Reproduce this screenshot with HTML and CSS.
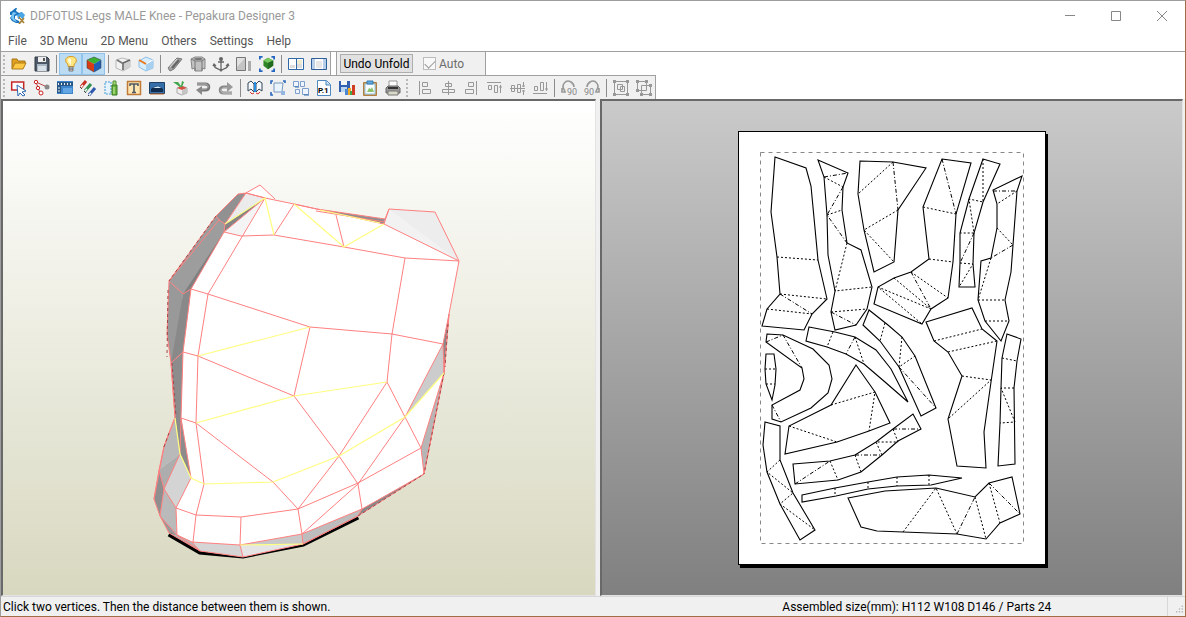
FILE: index.html
```html
<!DOCTYPE html>
<html lang="en">

<head>
    <meta charset="UTF-8">
    <meta name="viewport" content="width=device-width, initial-scale=1.0">
    <title>DDFOTUS Legs MALE Knee - Pepakura Designer 3</title>
    <link rel="stylesheet" href="styles.css">
</head>

<body>
    <!-- Title bar -->
    <header class="title-bar">
        <svg class="app-icon" viewBox="0 0 16 16">
            <path d="M8 0C5 0 5 2 3 3L1 4l0 3 2 0-2 3 2 3 4 2h4l-1-2-4-2 0-3 3-1 4-1 0-2-3 1-3-2z" fill="#1973bd"/>
            <path d="M4 4 3 6l-1 4 3 3 3 1-3-4 0-3 3-2z" fill="#7cc6f5"/>
            <path d="m8 7 5-3 3 3-2 4-5 0z" fill="#4aa5e4"/>
            <path d="m10 9 5 6M15 10l-5 6" stroke="#a8843c" stroke-width="1.800"/>
            <path d="m11 9 2 2" stroke="#ddd"/>
        </svg>
        <h1>DDFOTUS Legs MALE Knee - Pepakura Designer 3</h1>
        <div class="window-buttons">
            <button aria-label="Minimize"><svg viewBox="0 0 12 12"><path d="M1 5.500h10"/></svg></button>
            <button aria-label="Maximize"><svg viewBox="0 0 12 12"><path d="M1.500 1.500h9v9h-9z"/></svg></button>
            <button aria-label="Close"><svg viewBox="0 0 12 12"><path d="m1 1 10 10M11 1 1 11"/></svg></button>
        </div>
    </header>

    <nav class="menu-bar">
        <button>File</button>
        <button>3D Menu</button>
        <button>2D Menu</button>
        <button>Others</button>
        <button>Settings</button>
        <button>Help</button>
    </nav>

    <!-- Toolbars -->
    <div class="toolbar-row">
        <div class="toolbar">
            <span class="grip"></span>
            <button aria-label="Open"><svg viewBox="0 0 16 16"><path d="M1 13V3h5l1 2h7v3" fill="#e0a020" stroke="#a87414"/><path d="m1 13 3-6h11l-3 6z" fill="#ffc845" stroke="#b07c18"/></svg></button>
            <button aria-label="Save"><svg viewBox="0 0 16 16"><path d="M1 1h12l2 2v12H1z" fill="#4d5866" stroke="#343c46"/><path d="M4 1h8v5H4z" fill="#eee"/><path d="M9 2h2v3H9z" fill="#555"/><path d="M3 8h10v7H3z" fill="#a9b6c4"/><path d="M4 10h8v5H4z" fill="#d9e1e8"/></svg></button>
            <span class="separator"></span>
            <button class="active" aria-label="Light"><svg viewBox="0 0 16 16"><path d="M8 .500c7 0 6 6 3 8v2H5v-2c-3-2-4-8 3-8z" fill="#ffe680" stroke="#d89a20"/><path d="M7 2.500c-3 0-2 3-1 4l2 3V3z" fill="#fffbe0"/><path d="M6 11h4v4H6z" fill="#ddd" stroke="#777"/><path d="M6 13h4" stroke="#555"/></svg></button>
            <button class="active" aria-label="Texture"><svg viewBox="0 0 16 16"><path d="m1 4 7-3 7 3-7 4z" fill="#39b133"/><path d="m1 4 7 4v8l-7-4z" fill="#d83c14"/><path d="m15 4-7 4v8l7-4z" fill="#1f5fb8"/><path d="m1 4 7-3 7 3v8l-7 4-7-4z" fill="none" stroke="#333" stroke-opacity=".5"/></svg></button>
            <span class="separator"></span>
            <button aria-label="Edge"><svg viewBox="0 0 16 16"><path d="m1 4 6-2 8 2v7l-7 4-7-3z" fill="#f2f2f2" stroke="#b8b8b8"/><path d="M8 8v7l7-4V5z" fill="#cfcfcf"/><path d="m2 4 6 3.500V14" fill="none" stroke="#777" stroke-width="1.800"/><path d="m8 7 7-3" stroke="#666" stroke-width="1.500"/></svg></button>
            <button aria-label="Cut edge"><svg viewBox="0 0 16 16"><path d="m1 5 7-4 7 3v8l-7 3-7-4z" fill="#d8edfb" stroke="#8cbfe8"/><path d="m8 8 7-4v8l-7 3z" fill="#a6cff0"/><path d="m1 4 7 4 7-4" fill="none" stroke="#fff"/><path d="m1 4 7 4" stroke="#e8761c" stroke-width="2"/></svg></button>
            <span class="separator"></span>
            <button aria-label="Fold"><svg viewBox="0 0 16 16"><path d="m1 12 9-10 5 1-8 10-4 2z" fill="#a5a5a5" stroke="#777"/><path d="m5 12 7-8" stroke="#666" stroke-width="2"/><path d="m3 11 7-8" stroke="#ddd"/></svg></button>
            <button aria-label="Prism"><svg viewBox="0 0 16 16"><path d="m1 3 4-2h7l3 2v10l-3-1v3H5v-3l-3 1z" fill="#c2c2c2" stroke="#888"/><path d="M1 3 5 5h7l3-2M5 5v10M12 5v10" fill="none" stroke="#777"/><path d="m3 3 3-1h5l2 1-2 1H6z" fill="#777"/></svg></button>
            <button aria-label="Anchor"><svg viewBox="0 0 16 16"><circle cx="8" cy="3" r="2" fill="#666"/><path d="M8 4v10M5 6h6M1 9c0 4 5 3 7 6 2-3 7-2 7-6M0 10l1-2 2 2M13 10l2-2 1 2" fill="none" stroke="#666" stroke-width="1.300"/></svg></button>
            <button aria-label="Panel"><svg viewBox="0 0 16 16"><path d="M.500 1.500h9v13h-9z" fill="#c4c4c4" stroke="#777"/><path d="m1 2 8 0-8 9z" fill="#e2e2e2"/><path d="M12 5h3v10h-3z" fill="#aaa"/></svg></button>
            <button aria-label="Fit model"><svg viewBox="0 0 18 18"><path d="M1 4V1h3M14 1h3v3M1 14v3h3M14 17h3v-3" fill="none" stroke="#2466c0" stroke-width="2"/><path d="m5 5 5-3 6 3v6l-6 4-5-4z" fill="#318527"/><path d="m5 5 5-3 6 3-6 3z" fill="#78c860"/><path d="m10 8 6-3v6l-6 4z" fill="#246b22"/></svg></button>
            <span class="separator"></span>
            <button aria-label="Split view"><svg viewBox="0 0 16 16"><path d="M.500 2.500h15v11H.500z" fill="#fff" stroke="#2f69a8"/><path d="M9 4h5v4H9z" fill="#f0ead0"/><path d="M2 9h5v3H2zM9 8h5v4H9z" fill="#ddd"/><path d="M8.500 3v10" stroke="#2f69a8"/></svg></button>
            <button aria-label="Single view"><svg viewBox="0 0 16 16"><path d="M.500 2.500h15v11H.500z" fill="#b7cfe8" stroke="#2f5f98"/><path d="M4 3h8v10H4z" fill="#fff"/><path d="M5 5h6v7H5z" fill="#e7e7e7"/></svg></button>
        </div>
        <div class="toolbar unfold-bar">
            <button class="unfold">Undo Unfold</button>
            <label class="auto"><input type="checkbox" checked disabled>Auto</label>
        </div>
    </div>

    <div class="toolbar-row">
        <div class="toolbar second">
            <span class="grip"></span>
            <button aria-label="Select"><svg viewBox="0 0 16 16"><path d="M.700 2h12v8H.700z" fill="#fff" stroke="#c62828" stroke-width="1.500"/><path d="m6 5 9 6-4 1 3 3-2 1-3-3-2 3z" fill="#fff" stroke="#2b68b0"/></svg></button>
            <button aria-label="Join"><svg viewBox="0 0 16 16"><path d="m2 2 4 11M2 2l11 5" fill="none" stroke="#b44"/><circle cx="2" cy="2" r="1.700" fill="#fff" stroke="#c22"/><circle cx="4" cy="8" r="1.700" fill="#fff" stroke="#c22"/><circle cx="7" cy="13" r="2" fill="#fff" stroke="#c22"/><circle cx="13" cy="7" r="2.500" fill="#888"/></svg></button>
            <button aria-label="Flaps"><svg viewBox="0 0 16 16"><path d="M0 1h16v13H0z" fill="#3b86cc"/><path d="M0 2h16v4H4v7H0z" fill="#285888"/><path d="M1.500 3v2M4.500 3v2M7.500 3v2M10.500 3v2M13.500 3v2M1 8h2M1 11h2" stroke="#eee"/><path d="M6 8h9v5H6z" fill="#62a6e4"/></svg></button>
            <button aria-label="Colors"><svg viewBox="0 0 16 16"><g fill="none" stroke-width="3"><path d="m1 7 5-6" stroke="#c53020"/><path d="m5 11 6-7" stroke="#2e9150"/><path d="m9 15 6-7" stroke="#2c59ad"/></g><path d="m1 7 2-2M5 11l2-2M9 15l2-2" stroke="#fff" stroke-width="1.500"/><path d="m0 7 2 2M4 11l2 2M8 15l1 1" stroke="#444"/></svg></button>
            <button aria-label="Measure"><svg viewBox="0 0 16 16"><path d="M2 2h6v12H2z" fill="#e4f3ff" stroke="#459bd0" stroke-dasharray="2 1"/><path d="M9 5h5v10H9z" fill="#6bb13e" stroke="#397c24"/><path d="M10 1h3v4h-3z" fill="#9ed46c" stroke="#58923a"/><path d="M11 7v7" stroke="#cef2a7"/></svg></button>
            <button aria-label="Text"><svg viewBox="0 0 16 16"><path d="M1.500 1.500h13v13h-13z" fill="#ffe5b0" stroke="#c07a38" stroke-width="1.500"/><path d="M4 6V4h8v2M8 4v8M6 12.500h4" fill="none" stroke="#4f5963" stroke-width="1.600"/></svg></button>
            <button aria-label="Image"><svg viewBox="0 0 16 16"><path d="M.500 2.500h15v11H.500z" fill="#356ea8" stroke="#1f4165"/><path d="M2 9c4-3 7-4 12 0v3H2z" fill="#102d50"/><path d="M4 8c3-2 6-2 8 0z" fill="#d8ecff"/><path d="M1 14h14" stroke="#bd632a"/></svg></button>
            <button aria-label="Plant"><svg viewBox="0 0 16 16"><path d="m5 8 5-2 5 2v5l-5 2-5-2z" fill="#eee" stroke="#aaa"/><path d="m5 8 5 2 5-2-5-2z" fill="#d75142"/><path d="M10 10v5l5-2V8z" fill="#c4c4c4"/><path d="M8 7 1 2h5l3 4 1-5 2 1-2 5z" fill="#41a64d"/></svg></button>
            <button aria-label="Undo"><svg viewBox="0 0 16 16"><path d="M2 4h8c5 0 5 6 0 6H5" fill="none" stroke="#777" stroke-width="3"/><path d="M2 4h8c4 0 4 5 0 5H6" fill="none" stroke="#bbb"/><path d="m7 6-6 4 6 5z" fill="#888"/></svg></button>
            <button aria-label="Redo"><svg viewBox="0 0 16 16"><path d="M14 13H6c-5 0-5-6 0-6h5" fill="none" stroke="#888" stroke-width="3"/><path d="M14 13H6c-4 0-4-5 0-5h5" fill="none" stroke="#ccc"/><path d="m9 2 6 5-6 5z" fill="#999"/></svg></button>
            <span class="separator"></span>
            <button aria-label="Unfold"><svg viewBox="0 0 16 16"><path d="m1 3 3-2 3 3v8l-3-3-3 2zM15 3l-3-2-3 3v8l3-3 3 2z" fill="#f4faff" stroke="#345"/><path d="M8 2v10" stroke="#258ce0" stroke-width="2"/><path d="m3 12 2 2 2-1M9 13l2 1 2-2" fill="none" stroke="#d33"/></svg></button>
            <button aria-label="Bounds"><svg viewBox="0 0 16 16"><path d="M1 4V1h2M13 1h2v2M1 12v3h2" fill="none" stroke="#2868bd" stroke-width="1.600"/><path d="M4 3h9l-1 9H4z" fill="#eaf4ff" stroke="#7898bd"/><path d="M11 11h4v4h-4z" fill="#92b6df"/></svg></button>
            <button aria-label="Arrange"><svg viewBox="0 0 16 16"><g fill="#eef5ff" stroke="#7d9fca"><path d="M.500 1.500h5v5h-5zM7.500 1.500h4v5h-4zM2.500 9.500h4v4h-4zM9.500 8.500h6v6h-6z"/></g><path d="M2 7h4M11 15h5" fill="none" stroke="#366fb0"/></svg></button>
            <button aria-label="Page number"><svg viewBox="0 0 16 16"><path d="M1.500.500h9l4 4v11h-13z" fill="#fff" stroke="#4e88be"/><path d="M10 1v4h4" fill="#bddcf5" stroke="#4e88be"/><text x="2" y="13" class="page-label">P.1</text></svg></button>
            <button aria-label="Export"><svg viewBox="0 0 16 16"><path d="M0 1h11v11H0z" fill="#315eae"/><path d="M2 1h6v4H2z" fill="#f4f4f4"/><path d="M2 7h6v5H2z" fill="#b9d3f0"/><path d="M6 9h3v6H6z" fill="#4b88d0"/><path d="M9 8h3v7H9z" fill="#f5aa25"/><path d="M13 5h3v10h-3z" fill="#cf3c22"/><path d="M11 11h2v4h-2z" fill="#40a449"/></svg></button>
            <button aria-label="Clipboard"><svg viewBox="0 0 16 16"><path d="M1.500 2.500h13v13h-13z" fill="#cf9a5d" stroke="#b08040"/><path d="M3 4h10v10H3z" fill="#f9fdff" stroke="#8cc5e6"/><path d="M5 1h6v3H5z" fill="#62a9dc" stroke="#397ab0"/><path d="m5 12 2-4 2 1 1-2 2 5z" fill="#8cc26e"/></svg></button>
            <button aria-label="Print"><svg viewBox="0 0 16 16"><path d="M4 1h8v7H4z" fill="#fff" stroke="#999"/><path d="m1 8 2-2h10l2 2v5H1z" fill="#999" stroke="#666"/><path d="M3 7h10v2H3z" fill="#333"/><path d="M3 11h10v4H3z" fill="#d9d9c8" stroke="#777"/></svg></button>
            <span class="grip wide"></span>
            <button aria-label="Align left"><svg class="mono" viewBox="0 0 16 16"><path d="M2.500 1v14M5.500 2.500h5v4h-5zM5.500 9.500h8v4h-8z"/></svg></button>
            <button aria-label="Align center"><svg class="mono" viewBox="0 0 16 16"><path d="M8.500 1v14M5.500 3.500h6v3h-6zM2.500 9.500h12v3h-12z"/></svg></button>
            <button aria-label="Align right"><svg class="mono" viewBox="0 0 16 16"><path d="M13.500 1v14M5.500 2.500h5v4h-5zM2.500 9.500h8v4h-8z"/></svg></button>
            <button aria-label="Align top"><svg class="mono" viewBox="0 0 16 16"><path d="M1 2.500h14M2.500 5.500h3v4h-3zM8.500 5.500h3v7h-3zM14.500 13V5M13 7h3"/></svg></button>
            <button aria-label="Align middle"><svg class="mono" viewBox="0 0 16 16"><path d="M1 8.500h15M2.500 5.500h3v6h-3zM8.500 4.500h3v8h-3zM14.500 2v5M14.500 10v5M13 6h3M13 11h3"/></svg></button>
            <button aria-label="Align bottom"><svg class="mono" viewBox="0 0 16 16"><path d="M1 13.500h14M2.500 6.500h3v4h-3zM8.500 2.500h3v8h-3zM14.500 2v9M13 9h3"/></svg></button>
            <span class="separator"></span>
            <button aria-label="Rotate left"><svg class="mono" viewBox="0 0 16 16"><path d="M4 11C-1 5 5-1 10 2c3 2 3 3 3 5M1 8v4h4" stroke-width="1.600"/><text x="6" y="15">90</text></svg></button>
            <button aria-label="Rotate right"><svg class="mono" viewBox="0 0 16 16"><path d="M12 11C17 5 11-1 6 2 3 4 3 5 3 7M15 8v4h-4" stroke-width="1.600"/><text x="0" y="15">90</text></svg></button>
            <span class="separator"></span>
            <button aria-label="Group"><svg class="mono" viewBox="0 0 16 16"><path d="M1.500 1.500h13v13h-13zM4.500 4.500h5v5h-5zM7.500 6.500h4v5h-4z"/><path class="solid" d="M0 0h3v3H0zM13 0h3v3h-3zM0 13h3v3H0zM13 13h3v3h-3z"/></svg></button>
            <button aria-label="Ungroup"><svg class="mono" viewBox="0 0 16 16"><path d="M1.500 1.500h9v9h-9zM5.500 5.500h9v9h-9z"/><path class="solid" d="M0 0h3v3H0zM9 0h3v3H9zM0 9h3v3H0zM13 4h3v3h-3zM4 13h3v3H4zM13 13h3v3h-3z"/></svg></button>
        </div>
    </div>

    <!-- 3D and 2D views -->
    <main class="views">
        <section class="view view-3d">
            <svg viewBox="3 101 592 494">
                <path class="ground" d="m169 534 31 18 43 4 60-12 55-27"/>
                <path class="paper" d="m246 193 19 5 29 6 90 20 75 37-10 53-6 30 1 29-20 101-62 35-59 35-60 13-43-6-24-16V508l15-30-10-60 2-66 8-63 33-57z"/>
                <path class="paper" d="m246 193 14-8 15 14z"/>

                <g class="faces">
                    <path fill="#919191" d="m238 194 8-1-21 31-6-4-3-4z"/>
                    <path fill="#ebebeb" d="m246 193 19 5-40 26z"/>
                    <path fill="#858585" d="m225 224 40-26-41 34z"/>
                    <path fill="#f4f4f4" d="m224 232 41-34-24 38z"/>
                    <path fill="#9d9d9d" d="m216 216 9 8-1 8-33 57-8 5-14-13z"/>
                    <path fill="#808080" d="m224 232-41 62 8-5z"/>
                    <path fill="#999" d="m169 281 14 13-8 73-4-4-4-29z"/>
                    <path fill="#898989" d="m183 294 8-5-8 63-12 11z"/>
                    <path fill="#8c8c8c" d="m171 363 12-11-2 66 10 60-11-24-5-37z"/>
                    <path fill="#b9b9b9" d="m175 418 5 36-21 16 5-23z"/>
                    <path fill="#adadad" d="m180 454-16 35-5-19z"/>
                    <path fill="#d4d4d4" d="m180 454 11 24-15 30-12-19z"/>
                    <path fill="#8f8f8f" d="m159 470 5 19-4 27-6-17z"/>
                    <path fill="#bababa" d="m164 489 12 19 1 27-17-19z"/>
                    <path fill="#999" d="m160 516 17 19-8-2z"/>
                    <path fill="#b5b5b5" d="m177 535 15 7 8 9-31-18z"/>
                    <path fill="#d5d5d5" d="m192 542 48 3 3 12-43-6z"/>
                    <path fill="#e5e5e5" d="m240 545 63-1-60 13z"/>
                    <path fill="#c9c9c9" d="m240 545 62-11 1 10z"/>
                    <path fill="#bdbdbd" d="m302 534 60-25-4 7-55 28z"/>
                    <path fill="#888" d="m362 509 62-35-66 42z"/>
                    <path fill="#b6b6b6" d="m444 373-23 75 3 26z"/>
                    <path fill="#ccc" d="m443 344 1 29-39 44z"/>
                    <path fill="#888" d="m449 314-6 30 1 29z"/>
                    <path fill="#8f8f8f" d="m317 209 68 10-1 5z"/>
                    <path fill="#ededed" d="m384 224 5-15 46 3 24 49z"/>
                    <path fill="#f2f2f2" d="m384 224 5-15 70 52z"/>
                </g>

                <g class="edges">
                    <path d="m265 198-19-5-8 1-22 22-47 65-2 53 4 29 4 54-11 29-5 24-5 29 6 17 9 17 31 18 43 6 60-13 55-28 66-42 20-101 5-59 10-53-24-49-46-3-5 15 75 37"/>
                    <path d="m246 193 14-8 15 14M246 193l19 5 29 6 90 20M294 204l23 5 68 10 4-10M316 211l69 11"/>
                    <path d="m246 193-21 31-6-4-3-4M225 224l-1 8 41-34M219 220l-50 61 14 13 8-5 33-57M224 232l17 4 33-1 70 12 61 11 54 3"/>
                    <path d="m265 198-57 96-10 62-2 67 8 61-8 31-3 27"/>
                    <path d="m294 204-20 31M336 215l8 32M191 289l17 5 102 33 82 7 51 10M405 258l-13 76-5 48 18 35 16 31 3 26"/>
                    <path d="m191 289-8 63 15 4 96 40 45 60 19 28 4 25M310 327l-16 69M183 352l-12 11 4 54M183 352l-2 66 15 5 77 59 25 27 4 25"/>
                    <path d="m181 418 10 60-15 30-12-19 16-35 1-36M159 470l5 19-4 27 17 19-1-27 20 7 45 2 57-8 60-26 63-35"/>
                    <path d="m154 499 10-52 11-29M387 382l-48 74-41 53M405 417l-47 67-56 50-62 11-48-3-15-7M302 534l60-25-4 7-55 28-1-10M362 509l62-35M240 545l1-28M240 545l3 12M192 542l8 9-23-16"/>
                    <path d="m449 314-6 30 1 29-23 75M443 344l-38 73M449 314l-5 59-20 101"/>
                </g>
                <path class="hidden-edges" d="m216 216-47 65M168 290l-1 67M172 363l4 54M164 447l5-14M358 516l66-42M444 373l-20 101M448 324l-3 43"/>
                <path class="yellow-edges" d="m225 224 40-26 9 37M294 204l50 43 40-23M320 210l60 13M198 356l112-29M196 423l98-27 93-14M444 373l-39 44-66 39-66 26-69 2-13-6-11-24-5-36M240 545l63-1"/>
            </svg>
        </section>

        <section class="view view-2d">
            <div class="sheet">
                <svg viewBox="739 132 306 432">
                    <path class="margin" d="M760.500 152.500h263v391h-263z"/>
                    <g class="parts">
                        <path d="M775 157 806 168 811 186 818 260 827 299 812 314 804 330 762 326 767 309 780 294 777 257 771 212z"/>
                        <path d="M818 160 848 173 843 187 842 210 847 243 861 250 872 287 867 309 856 325 835 330 831 312 835 291 828 255 827 215 824 177z"/>
                        <path d="M860 161 893 162 926 168 898 210 894 262 874 272 864 230 858 194z"/>
                        <path d="M942 159 971 163 956 214 953 262 948 298 931 309 922 324 874 304 878 287 894 278 911 272 929 259 923 207z"/>
                        <path d="M983 159 1000 164 983 202 974 233 973 264 975 287 959 287 960 263 960 233 969 199z"/>
                        <path d="M1022 176 1017 191 1013 245 1011 272 1005 300 1009 321 1001 341 985 321 978 300 981 261 991 258 997 228 997 204 993 190z"/>
                        <path d="M926 322 972 308 982 329 997 341 991 382 984 432 986 468 957 466 948 419 962 376 948 352 934 341z"/>
                        <path d="M1007 334 1021 339 1017 361 1014 388 1015 464 998 466 1000 423 1001 388 1002 358z"/>
                        <path d="M869 310 863 325 880 341 899 367 921 416 936 408 915 356 902 337 888 325z"/>
                        <path d="M809 327 835 332 855 337 876 350 891 369 908 402 885 382 864 364 846 354 827 347 806 341z"/>
                        <path d="M767 334 783 335 813 349 829 365 832 379 828 393 811 408 781 422 772 419 772 405 800 390 804 379 802 368 766 342z"/>
                        <path d="M766 354 774 354 776 369 775 385 772 400 766 384 765 369z"/>
                        <path d="M856 365 875 392 890 423 869 431 837 442 785 454 789 426 831 405z"/>
                        <path d="M765 422 780 426 780 460 793 493 815 530 800 540 780 504 767 472 763 445z"/>
                        <path d="M793 464 830 461 855 455 876 442 893 429 913 414 921 429 898 441 882 455 861 472 838 480 795 484z"/>
                        <path d="M802 495 835 488 868 482 897 477 929 475 962 478 931 485 897 486 868 489 836 496 802 502z"/>
                        <path d="M848 498 885 491 936 488 975 497 989 483 1012 477 1020 514 1000 523 986 539 957 534 903 532 877 531 861 527z"/>
                    </g>
                    <path class="valley" d="M777 257 818 260M780 294 827 299M767 309 812 314M824 177 843 187M827 215 842 210M847 243 835 291 872 287M831 312 867 309M893 162 858 194M898 210 864 230 894 262M923 207 956 214M929 259 953 262M911 272 948 298M894 278 931 309 878 287 922 324M983 159V202L969 199 974 233H960M960 263 973 264 959 287M1017 191 997 204M997 228 1013 245M991 258 978 300H1005M985 321H1009M934 341 982 329M948 352 997 341M962 376 991 380 948 419M1002 358 1017 361M1014 388H1001L1015 422 1000 423M885 323 880 341M902 337 899 367 915 356M833 332 827 347M855 337 864 364M765 369H776M766 384H775M831 405 875 392 869 431M789 426 837 442M780 460 767 472 793 493 780 504 815 530M830 461 838 480M855 455 861 472M882 455 876 442H898L893 429M835 488V496M868 482V489M897 477V486M929 475V485M903 532 936 488 957 534M975 497 986 539M989 483 1000 523"/>
                    <path class="mountain" d="M780 294 812 314M824 177 848 173M843 187 827 215 847 243M831 312 856 325M893 162 898 210M942 159 956 214M911 272 931 309M974 233 960 263M993 191H1017M1013 245 991 258M899 367 936 408M855 337 846 354M766 342 783 335 802 368M772 405 781 422M795 484 830 461M855 455H882M893 429H921M957 534 975 497M989 483 1020 514"/>
                </svg>
            </div>
        </section>
    </main>

    <footer class="status-bar">
        <span>Click two vertices. Then the distance between them is shown.</span>
        <span>Assembled size(mm): H112 W108 D146 / Parts 24</span>
        <svg class="resize" viewBox="0 0 10 10"><path d="M8 0h2v2H8zM4 4h2v2H4zM8 4h2v2H8zM0 8h2v2H0zM4 8h2v2H4zM8 8h2v2H8z"/></svg>
    </footer>
</body>

</html>
```

FILE: styles.css
```css
* {
    box-sizing: border-box;
}

body {
    margin: 0;
    height: 100vh;
    display: flex;
    flex-direction: column;
    background-color: white;
    border: 1px solid #a06e46;
    border-top-color: #9d9d9d;
    border-left-color: #9d9d9d;
    font-family: Roboto, "Open Sans", sans-serif;
    font-size: 12px;
    color: black;
}

button {
    font: inherit;
    color: inherit;
    background: none;
    border: none;
    padding: 0;
}

.title-bar {
    display: flex;
    align-items: center;
    height: 30px;
    flex-shrink: 0;
    padding-left: 8px;
}

.title-bar h1 {
    margin: 0 0 0 5px;
    font-size: 12px;
    font-weight: normal;
    color: #999;
}

.app-icon {
    width: 16px;
    height: 16px;
}

.window-buttons {
    display: flex;
    margin-left: auto;
}

.window-buttons button {
    width: 46px;
    height: 28px;
    display: flex;
    align-items: center;
    justify-content: center;
}

.window-buttons svg {
    width: 12px;
    height: 12px;
    fill: none;
    stroke: #888;
}

.menu-bar {
    display: flex;
    gap: 13px;
    height: 20px;
    flex-shrink: 0;
    padding: 0 7px;
    color: #555;
}

/* Toolbars */
.toolbar-row {
    display: flex;
    height: 24px;
    flex-shrink: 0;
    border-top: 1px solid #a0a0a0;
}

.toolbar-row + .toolbar-row {
    border-top: none;
}

.toolbar {
    display: flex;
    align-items: center;
    background-color: #f0f0f0;
    border-right: 1px solid #a0a0a0;
}

.toolbar.second {
    border-top: 1px solid #a0a0a0;
}

.toolbar > button {
    width: 23px;
    height: 22px;
    display: flex;
    align-items: center;
    justify-content: center;
}

.toolbar > button.active {
    background-color: #bcdcf4;
    border: 1px solid #90c4ec;
}

.toolbar svg {
    width: 16px;
    height: 16px;
    overflow: visible;
}

.toolbar .mono {
    fill: none;
    stroke: #989898;
}

.toolbar .mono text {
    fill: #888;
    stroke: none;
    font-size: 9px;
}

.toolbar .mono .solid {
    fill: #989898;
    stroke: none;
}

.page-label {
    font-size: 8px;
    font-weight: bold;
}

.grip {
    width: 6px;
    height: 19px;
    background: radial-gradient(circle at 3px 2px, #b8b8b8 1px, transparent 1px) 0 0 / 6px 4px;
}

.grip.wide {
    width: 9px;
    background-size: 9px 4px;
}

.separator {
    width: 6px;
    height: 18px;
    background: linear-gradient(#8c8c8c, #8c8c8c) center / 1px 100% no-repeat;
}

.toolbar.unfold-bar {
    border-left: 1px solid #a0a0a0;
    padding: 0 21px 0 3px;
    margin-left: 5px;
}

.toolbar .unfold {
    width: 73px;
    height: 19px;
    background-color: #e1e1e1;
    border: 1px solid #adadad;
    white-space: nowrap;
}

.auto {
    display: flex;
    align-items: center;
    gap: 3px;
    margin-left: 10px;
    color: #6d6d6d;
}

.auto input {
    appearance: none;
    width: 13px;
    height: 13px;
    margin: 0;
    border: 1px solid #bcbcbc;
    background-color: #f8f8f8;
}

.auto input:checked::before {
    content: "";
    display: block;
    width: 9px;
    height: 5px;
    margin: 2px 1px;
    border-left: 1px solid #999;
    border-bottom: 1px solid #999;
    transform: rotate(-45deg);
}

/* Views */
.views {
    display: grid;
    grid-template-columns: 595fr 4px 583fr;
    flex: 1;
    min-height: 0;
    padding-right: 2px;
    background-color: #f0f0f0;
}

.view {
    min-width: 0;
    min-height: 0;
    border-top: 2px solid #696969;
    border-left: 2px solid #696969;
    border-right: 1px solid #e3e3e3;
    border-bottom: 1px solid #e3e3e3;
}

.view-3d {
    background: linear-gradient(white, #d8d8c0);
}

.view-3d svg {
    display: block;
    width: 100%;
    height: 100%;
}

.paper {
    fill: white;
}

.ground {
    fill: none;
    stroke: black;
    stroke-width: 5;
}

.edges {
    fill: none;
    stroke: #ff8080;
}

.yellow-edges {
    fill: none;
    stroke: #ffff80;
    stroke-width: 1.2;
}

.hidden-edges {
    fill: none;
    stroke: #a04848;
    stroke-dasharray: 3 3;
}

.view-2d {
    grid-column: 3;
    display: flex;
    align-items: center;
    justify-content: center;
    background: linear-gradient(#cacaca, #808080);
}

.sheet {
    width: 308px;
    background-color: white;
    border: 1px solid black;
    box-shadow: 2px 3px 0 black;
}

.sheet svg {
    display: block;
    width: 100%;
    fill: none;
    stroke: black;
}

.parts {
    stroke-width: 1.1;
}

.sheet .margin {
    stroke: #888;
    stroke-dasharray: 4 4;
}

.valley {
    stroke-dasharray: 2 2;
}

.mountain {
    stroke-dasharray: 4 2 1 2;
}

.status-bar {
    display: grid;
    grid-template-columns: 780fr 385fr 18px;
    align-items: center;
    height: 20px;
    flex-shrink: 0;
    padding-left: 2px;
    background-color: #f0f0f0;
    border-top: 1px solid #d7d7d7;
    white-space: nowrap;
}

.resize {
    width: 18px;
    height: 19px;
    padding: 8px 2px 3px 8px;
    fill: #bbb;
    border-left: 1px solid #d7d7d7;
}
```
